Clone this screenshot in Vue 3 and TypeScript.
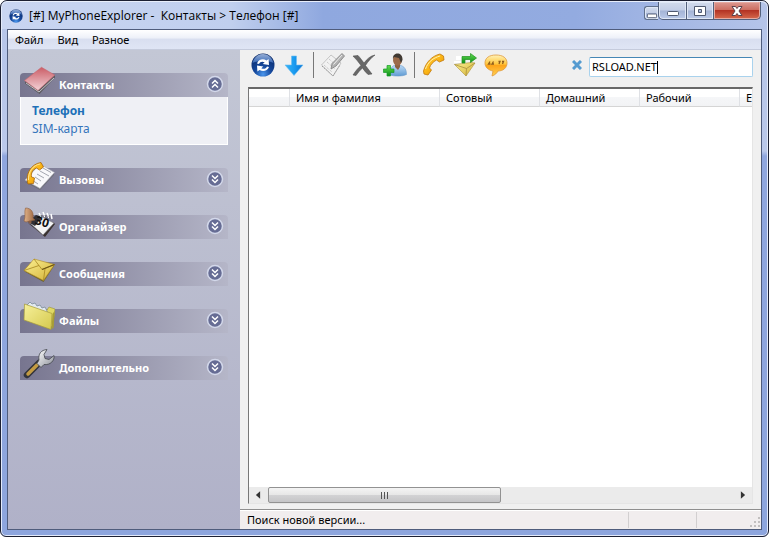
<script setup lang="ts">
import { ref } from 'vue'

interface Group {
  id: string
  title: string
  open: boolean
  links: string[]
}

const groups = ref<Group[]>([
  { id: 'contacts', title: 'Контакты', open: true, links: ['Телефон', 'SIM-карта'] },
  { id: 'calls', title: 'Вызовы', open: false, links: [] },
  { id: 'organizer', title: 'Органайзер', open: false, links: [] },
  { id: 'messages', title: 'Сообщения', open: false, links: [] },
  { id: 'files', title: 'Файлы', open: false, links: [] },
  { id: 'extras', title: 'Дополнительно', open: false, links: [] },
])
const menus = ['Файл', 'Вид', 'Разное']
const columns = ['', 'Имя и фамилия', 'Сотовый', 'Домашний', 'Рабочий', 'E']
const query = ref('RSLOAD.NET')
</script>

<template>
  <div class="window">
    <svg class="defs" aria-hidden="true">
      <defs>
        <radialGradient id="orb" cx=".5" cy=".9" r=".9">
          <stop offset="0" stop-color="#4b97ee" /><stop offset=".4" stop-color="#15489c" /><stop offset="1" stop-color="#0b2763" />
        </radialGradient>
        <linearGradient id="gloss" x2="0" y2="1"><stop offset="0" stop-color="#c4dafa" /><stop offset="1" stop-color="#4478c8" /></linearGradient>
        <linearGradient id="down" x2="1"><stop offset="0" stop-color="#37b3f6" /><stop offset=".5" stop-color="#1b9cf0" /><stop offset="1" stop-color="#0872d6" /></linearGradient>
        <linearGradient id="red" x2="0" y2="1"><stop offset="0" stop-color="#cb5d66" /><stop offset="1" stop-color="#f3d3d8" /></linearGradient>
        <linearGradient id="gold" x2="1" y2="1"><stop offset="0" stop-color="#ffd251" /><stop offset=".5" stop-color="#fbb515" /><stop offset="1" stop-color="#d87c04" /></linearGradient>
        <linearGradient id="mail" x2="1" y2="1"><stop offset="0" stop-color="#fbf092" /><stop offset="1" stop-color="#d3b136" /></linearGradient>
        <linearGradient id="folder" x2="1" y2="1"><stop offset="0" stop-color="#f6f09a" /><stop offset="1" stop-color="#d5c94e" /></linearGradient>
        <linearGradient id="green" x2="0" y2="1"><stop offset="0" stop-color="#62dc50" /><stop offset="1" stop-color="#0c8f17" /></linearGradient>
        <linearGradient id="shirt" x2="0" y2="1"><stop offset="0" stop-color="#bfdcf7" /><stop offset="1" stop-color="#5f9bd3" /></linearGradient>
        <linearGradient id="steel" x2="1" y2="1"><stop offset="0" stop-color="#fff" /><stop offset="1" stop-color="#8b8f98" /></linearGradient>
        <linearGradient id="bell" x2="1"><stop offset="0" stop-color="#e2b48b" /><stop offset="1" stop-color="#99643f" /></linearGradient>
        <linearGradient id="bubble" x2="0" y2="1"><stop offset="0" stop-color="#fff2b8" /><stop offset=".42" stop-color="#ffc83f" /><stop offset=".5" stop-color="#fda51a" /><stop offset="1" stop-color="#ffd052" /></linearGradient>
      </defs>
      <symbol id="sync" viewBox="0 0 24 24">
        <circle cx="12" cy="12" r="11.5" fill="url(#orb)" />
        <path d="M1.500 10C3 4 7.500 1 12 1s9 3 10.500 9C16 7 8 7 1.500 10z" fill="url(#gloss)" opacity=".75" />
        <g fill="#fff">
          <path d="M6 10.500C7.500 6.500 12 5.200 15.500 7.500L17.600 6l.4 6-6.300-1 2-1.700C11.500 8.200 9 8.500 8 11z" />
          <path d="M18 14c-1.500 4-6 5.200-9.500 3L6.400 18.500l-.4-6 6.300 1-2 1.700c2.200 1.100 4.700.8 5.700-1.700z" />
        </g>
      </symbol>
    </svg>

    <header class="titlebar">
      <svg class="app-icon"><use href="#sync" /></svg>
      <h1>[#] MyPhoneExplorer -&nbsp; Контакты &gt; Телефон [#]</h1>
      <div class="caption">
        <button class="tray" aria-label="Свернуть в трей"><svg viewBox="0 0 13 15"><rect x="1.5" y="7.5" width="10" height="4" rx="1" fill="#fff" stroke="#505a70" /></svg></button>
        <button class="min" aria-label="Свернуть"><svg viewBox="0 0 14 15"><rect x="1.5" y="8.5" width="11" height="4" rx="1" fill="#fff" stroke="#505a70" /></svg></button>
        <button class="max" aria-label="Развернуть"><svg viewBox="0 0 14 15"><path d="M1.500 3.500h11v9h-11zM5.500 6.500v3h3v-3z" fill="#fff" fill-rule="evenodd" stroke="#505a70" /></svg></button>
        <button class="close" aria-label="Закрыть"><svg viewBox="0 0 14 15"><path d="M2 3.500h3.500L7 5.500l1.500-2H12L9 8l3 4.500H8.500l-1.500-2-1.500 2H2L5 8z" fill="#fff" stroke="#5d414b" /></svg></button>
      </div>
    </header>

    <div class="client">
      <nav class="menubar"><button v-for="m in menus" :key="m">{{ m }}</button></nav>
      <div class="body">
        <aside class="sidebar">
          <section v-for="g in groups" :key="g.id">
            <button class="group" :aria-expanded="g.open" @click="g.open = !g.open">
              <svg class="group-icon" viewBox="0 0 32 32">
                <template v-if="g.id === 'contacts'">
                  <path d="M2 16l13 9 17-15v2.500L16.500 29 2 18.500z" fill="#5d5b60" />
                  <path d="M3 18l13 9 15-14" fill="none" stroke="#dcdce0" stroke-width=".8" />
                  <path d="M1.500 15.500L18.500 2.300 31.700 10 15 25.500z" fill="url(#red)" stroke="#ca666f" stroke-width=".6" />
                </template>
                <template v-else-if="g.id === 'calls'">
                  <path d="M2 22l15 8L31 15v-2z" fill="#6d6d78" />
                  <path d="M2 20L17 4l14.500 8.500L17 28.500z" fill="#f8f8fa" stroke="#a7a9b5" stroke-width=".6" />
                  <path d="M14 14l7 4m-4-7l9 5m-6-8l8 4.500M12 17l6 4m-9-1l6 4" stroke="#a4a7b0" fill="none" />
                  <path d="M5 24C2 14 8 4 18 2.500l2.500 4.500-4 3-3-2C9.500 9.500 8 13 8.500 17l3 1-1 5.500z" fill="url(#gold)" stroke="#a8640a" stroke-width=".8" />
                  <path d="M5.500 20C5 12 10 5 17 4" fill="none" stroke="#ffe694" />
                </template>
                <template v-else-if="g.id === 'organizer'">
                  <path d="M5 16l17 14 10-13-2-2-11 8z" fill="#3a3230" />
                  <path d="M7 16l8-8 16 8-11 12z" fill="#f4f4f4" stroke="#77777d" stroke-width=".6" />
                  <path d="M5 15l8-7 6 2-7 9z" fill="#303036" />
                  <path d="M16 6l2 4m2-5l2 5m2-4l2 5m2-4l1 5" stroke="#fff" stroke-width="1.500" />
                  <path d="M18 8l1 3m3-3l1 3m3-2l1 3" stroke="#777" />
                  <text x="11" y="17" transform="rotate(18 12 18)" class="date">30</text>
                  <path d="M2.500 1C8 1 11 5 10 11l2 2-9 2-2-1C3 9 1 5 2.500 1z" fill="url(#bell)" stroke="#8b5d3c" stroke-width=".6" /><circle cx="7" cy="15" r="1.600" fill="#8a5e44" />
                </template>
                <template v-else-if="g.id === 'messages'">
                  <path d="M1.500 17.500L20.500 28 31 12v-1z" fill="#6d6330" />
                  <path d="M1 16.500L11 5l20.500 5.500L20.500 26.500z" fill="url(#mail)" stroke="#b28c20" stroke-width=".6" />
                  <path d="M11 5l8 10.500 12.500-5M1 16.500l15-5M20.500 26.500l1.500-12" fill="none" stroke="#a6851f" stroke-width=".8" />
                  <path d="M19 15.500l12.500-5" fill="none" stroke="#6d5614" stroke-width="1.200" />
                </template>
                <template v-else-if="g.id === 'files'">
                  <path d="M5 3l19 6 2-3 6 2-2 18-4-1z" fill="#e0d964" stroke="#9a9135" stroke-width=".6" />
                  <path d="M4 4l3-3 2 2 3-1 2 3 3-1 2 3 3-1 3 6" fill="#e2e9ef" stroke="#7b8b99" stroke-width=".8" />
                  <path d="M1.500 3L29 12.500 28 28.500 1 19z" fill="url(#folder)" stroke="#a69b3a" stroke-width=".7" />
                  <path d="M29.500 13l-1 15 2-1L31.500 10z" fill="#a89d35" />
                </template>
                <template v-else>
                  <path d="M4 27L16 15" stroke="#33343c" stroke-width="6.500" stroke-linecap="round" />
                  <path d="M5 26l9-9" stroke="#c39b42" stroke-width="3.500" stroke-linecap="round" />
                  <path d="M16 12c-1-6 2-10 8-10.500l-3 5 1 4 4 1 5-4c1 5-4 10-10 9l-3 3-4-4z" fill="url(#steel)" stroke="#43464d" stroke-width=".8" />
                </template>
              </svg>
              <span class="group-title">{{ g.title }}</span>
              <svg class="chevron" viewBox="0 0 18 18">
                <circle cx="9" cy="9" r="7.500" fill="#666c94" stroke="#d3d8ea" stroke-width="1.500" />
                <path :d="g.open ? 'M6 8.500l3-3 3 3M6 12.500l3-3 3 3' : 'M6 5.500l3 3 3-3M6 9.500l3 3 3-3'" fill="none" stroke="#fff" stroke-width="1.500" />
              </svg>
            </button>
            <div v-if="g.open" class="links">
              <a v-for="(l, i) in g.links" :key="l" href="#" :class="{ current: i === 0 }">{{ l }}</a>
            </div>
          </section>
        </aside>

        <main class="content">
          <div class="toolbar">
            <button aria-label="Синхронизация"><svg viewBox="0 0 24 24"><use href="#sync" /></svg></button>
            <button aria-label="Загрузить"><svg viewBox="0 0 24 24"><path d="M9.500 3h5v9h6.500L12 22.500 3 12h6.500z" fill="url(#down)" stroke="#6bbcf0" stroke-width=".6" /></svg></button>
            <i class="sep"></i>
            <button aria-label="Изменить"><svg viewBox="0 0 24 24"><path d="M.5 12L10 2l10 8-8 13z" fill="#f2f2f2" stroke="#b0b0b0" stroke-width=".7" /><path d="M3 12l8 7M6 9l8 7M8 6l8 7" stroke="#bbb" stroke-dasharray="1 1" /><path d="M1 13l11 10 7-11" fill="none" stroke="#999" stroke-dasharray="1.500 1" /><path d="M21 .5l2.500 2.500-8.500 10-5 3 1-5.500z" fill="#b2b2b2" stroke="#808080" stroke-width=".8" /><path d="M21 2l-8.500 9.500" stroke="#eee" /></svg></button>
            <button aria-label="Удалить"><svg viewBox="0 0 24 24"><path d="M1 3l5-.5c2 2 4 5 6 7.500 3-4 6-7 11-8-4 3-7 6.500-9.500 10.500L20 21l-4 .5c-2-2-4-4-5.500-6.500C8 17 6 20 4 22.500L1 22c2.500-4 5-7 8-9.500C6.500 9 4 6 1 3z" fill="#686868" stroke="#444" stroke-width=".5" /></svg></button>
            <button aria-label="Добавить контакт"><svg viewBox="0 0 24 24"><path d="M7 22c0-7 2-10 7-10 6 0 9.500 3 9.500 9.500-4 2-12 2-16.500.5z" fill="url(#shirt)" stroke="#6f9ecb" stroke-width=".6" /><path d="M12 11h5v3l-2 3-3-3z" fill="#8d6040" /><ellipse cx="14.500" cy="7" rx="4.500" ry="5.500" fill="#9b6a49" /><path d="M10 6c-1-7 10-8 9.500 1L18 10l-2-5-5-1z" fill="#403932" /><path d="M4 12.500h3.500V16H11v3.500H7.500V23H4v-3.500H.5V16H4z" fill="url(#green)" stroke="#159b28" stroke-width=".7" /></svg></button>
            <i class="sep"></i>
            <button aria-label="Позвонить"><svg viewBox="0 0 24 24"><path d="M1.500 18C4 9 10 3 18 1l3.500 2L22 7l-4.500 2-3-2c-3.500 2-6 4.500-7 8l2 2L6 22l-4-1z" fill="url(#gold)" stroke="#c1780a" stroke-width=".8" /><path d="M3.500 16C6 9 11 5 18 3" fill="none" stroke="#fff0ab" /></svg></button>
            <button aria-label="Отправить сообщение"><svg viewBox="0 0 24 24"><path d="M3 3h8v4H3zM1 8h7v2H1z" fill="#fff" /><path d="M1.500 11.500L18 9.500l4 .5-9 13z" fill="url(#mail)" stroke="#ac9240" stroke-width=".6" /><path d="M1.500 11.500l12 4 8.500-5.500M13 23l.5-7.500" fill="none" stroke="#a9913c" stroke-width=".8" /><path d="M9 3.500h8.500V.5L23.500 5l-6 4.500v-3H12V10H9z" fill="url(#green)" stroke="#21901d" stroke-width=".7" /></svg></button>
            <button aria-label="Чат"><svg viewBox="0 0 24 24"><path d="M12 2c7 0 11 3 11 8s-4 8-9 8c-1 2-3 4-6 5l1-5C4 17 1 14 1 10c0-5 4-8 11-8z" fill="url(#bubble)" stroke="#df9a3c" stroke-width=".8" /><path d="M6 8.500L4.500 11h2M9.500 8.500L8 11h2M14.500 8.500h1.500L15 11m3-2.500h1.500L18.500 11" fill="none" stroke="#8f5c1c" stroke-width="1.300" /></svg></button>
            <button class="clear" aria-label="Очистить" @click="query = ''"><svg viewBox="0 0 10 10"><path d="M1 1l8 8M9 1L1 9" stroke="#559bd0" stroke-width="3" /></svg></button>
            <label class="search"><input v-model="query" aria-label="Поиск" size="10" /><i class="caret"></i></label>
          </div>
          <div class="list">
            <table>
              <thead><tr><th v-for="(c, i) in columns" :key="i" :class="{ mark: i === 0, name: i === 1 }">{{ c }}</th></tr></thead>
              <tbody></tbody>
            </table>
            <div class="scrollbar">
              <button aria-label="Прокрутить влево"><svg viewBox="0 0 16 15"><path d="M10 4v7L6 7.500z" fill="#333" /></svg></button>
              <div class="track"><div class="thumb"><i></i><i></i><i></i></div></div>
              <button aria-label="Прокрутить вправо"><svg viewBox="0 0 16 15"><path d="M6 4v7l4-3.500z" fill="#333" /></svg></button>
            </div>
          </div>
          <footer class="status">
            <span class="message">Поиск новой версии...</span><span class="cell"></span>
            <span class="cell"><svg viewBox="0 0 12 12"><path d="M9 1h2v2H9zM5 5h2v2H5zm4 0h2v2H9zM1 9h2v2H1zm4 0h2v2H5zm4 0h2v2H9z" fill="#c2bfbf" /></svg></span>
          </footer>
        </main>
      </div>
    </div>
  </div>
</template>

<style>
body { margin: 0; background: #fff; }
</style>

<style scoped>
* { box-sizing: border-box; }
button { font: inherit; color: inherit; border: 0; padding: 0; margin: 0; background: none; }
svg { display: block; }
.window { height: 100vh; display: flex; flex-direction: column; padding: 0 6px 6px; border: 1px solid #1c2033; border-radius: 7px 7px 6px 6px; background: linear-gradient(#b6c5e9 0, #bac8ea 150px, #8fa6de 155px, #8da5dd 100%); box-shadow: inset 0 0 0 1px #e3eafa; font: 11px/16px "Noto Sans", "Open Sans", sans-serif; color: #000; overflow: hidden; }
.defs { width: 0; height: 0; position: absolute; }
.titlebar { height: 28px; flex: none; display: flex; align-items: center; margin: 0 -5px; padding-left: 7px; background: linear-gradient(90deg, #c9d5f1 0, #c0cfee 30%, #8fa8df 42%, #93abe0 75%, #b5c4e9 100%); border-top: 1px solid #e8eefb; border-radius: 6px 6px 0 0; }
.app-icon { width: 14px; height: 14px; }
h1 { flex: 1; margin: 0 0 0 6px; font: 12px/16px "Open Sans", "Noto Sans", sans-serif; white-space: nowrap; }
.caption { display: flex; align-self: flex-start; margin-right: 6px; }
.caption button { height: 18px; display: grid; place-items: center; border: 1px solid #53607c; border-top: 0; background: linear-gradient(#d2dbec 0, #c3cee6 48%, #a4b4d6 52%, #bbcae9 100%); box-shadow: inset 0 0 0 1px #dfe7f5; }
.caption svg { width: 14px; height: 15px; }
.caption .tray { width: 14px; height: 14px; margin-top: 4px; border: 1px solid #60708c; border-right: 0; border-radius: 3px 0 0 3px; }
.caption .tray svg { width: 12px; height: 14px; }
.caption .min { width: 29px; border-radius: 0 0 0 5px; }
.caption .max { width: 27px; border-left: 0; }
.caption .close { width: 47px; border-left: 0; border-radius: 0 0 5px 0; background: linear-gradient(#dd9a92 0, #cd6f62 45%, #b33324 50%, #d66a4d 100%); box-shadow: inset 0 0 0 1px #e5aaa1; }
.client { flex: 1; min-height: 0; display: flex; flex-direction: column; border: 1px solid #4f5c7c; background: #f0f0f0; }
.menubar { height: 20px; flex: none; display: flex; gap: 14px; padding-left: 7px; background: linear-gradient(#fff 0, #eef1f9 40%, #d9dff0 50%, #dfe5f5 100%); border-bottom: 1px solid #c5cbdc; }
.body { flex: 1; min-height: 0; display: flex; }
.sidebar { width: 232px; flex: none; display: flex; flex-direction: column; gap: 23px; padding: 23px 12px 0; background: linear-gradient(#c3c7d5, #b0b1c8); }
.group { width: 100%; height: 24px; display: flex; align-items: center; padding: 0 4px 0 3px; background: linear-gradient(90deg, #77758f, #b5b6c8); border-radius: 4px 4px 0 0; color: #fff; font-size: 11px; font-weight: 700; text-align: left; }
.group-icon { width: 32px; height: 32px; margin-top: -8px; }
.date { font-size: 12px; font-weight: 700; fill: #111; }
.group-title { flex: 1; margin-left: 4px; }
.chevron { width: 18px; height: 18px; margin-top: -3px; }
.links { display: flex; flex-direction: column; gap: 2px; height: 48px; padding: 6px 11px; background: #eff0f5; border: 1px solid #fff; border-top: 0; font-size: 12px; }
.links a { color: #3575bc; text-decoration: none; }
.links .current { font-weight: 700; color: #2070b8; }
.content { flex: 1; min-width: 0; display: flex; flex-direction: column; }
.toolbar { height: 37px; flex: none; display: flex; align-items: center; gap: 7px; padding: 0 8px 7px 11px; }
.toolbar button { flex: none; }
.toolbar button svg { width: 24px; height: 24px; }
.sep { width: 1px; height: 26px; background: #777; }
.toolbar .clear { margin-left: auto; }
.toolbar .clear svg { width: 10px; height: 10px; }
.search { width: 164px; height: 20px; display: flex; align-items: center; margin-top: 4px; padding-left: 2px; border: 1px solid #a9d2ed; border-top-color: #4587b5; border-radius: 2px; background: #fff; }
.search input { width: 65px; border: 0; padding: 0; outline: 0; font: inherit; background: none; }
.caret { width: 1px; height: 13px; background: #000; }
.list { flex: 1; min-height: 0; margin: 0 8px 5px; display: flex; flex-direction: column; justify-content: space-between; border: 1px solid #e5e5e5; border-top: 2px solid #686868; border-left-color: #777; background: #fff; overflow: hidden; }
table { width: 100%; table-layout: fixed; border-collapse: separate; border-spacing: 0; }
th { width: 100px; height: 18px; padding: 0 0 0 6px; font-weight: 400; text-align: left; border-right: 1px solid #dfe1e5; border-bottom: 1px solid #d5d5d5; background: linear-gradient(#fff 45%, #f5f6f8 50%, #f2f3f5); white-space: nowrap; }
th:last-child { width: auto; border-right: 0; }
.mark { width: 41px; }
.name { width: 150px; }
.scrollbar { height: 16px; display: flex; background: #ebebeb; }
.scrollbar button svg { width: 18px; height: 16px; }
.track { flex: 1; display: flex; padding: 0 1px; }
.thumb { width: 50%; display: flex; align-items: center; justify-content: center; gap: 2px; border: 1px solid #929292; border-radius: 2px; background: linear-gradient(#f4f4f4 0, #e7e7e7 48%, #d2d2d4 52%, #c5c5c7); }
.thumb i { width: 1px; height: 7px; background: #555; }
.status { height: 20px; flex: none; display: flex; padding: 2px 0 1px 7px; border-top: 1px solid #8f8f8f; background: #f1edee; box-shadow: inset 0 1px #fff; }
.message { flex: 1; }
.cell { width: 68px; display: flex; justify-content: flex-end; align-items: flex-end; border-left: 1px solid #d2cfd0; }
.cell svg { width: 12px; height: 12px; }
.cell:last-child { width: 65px; }
</style>
